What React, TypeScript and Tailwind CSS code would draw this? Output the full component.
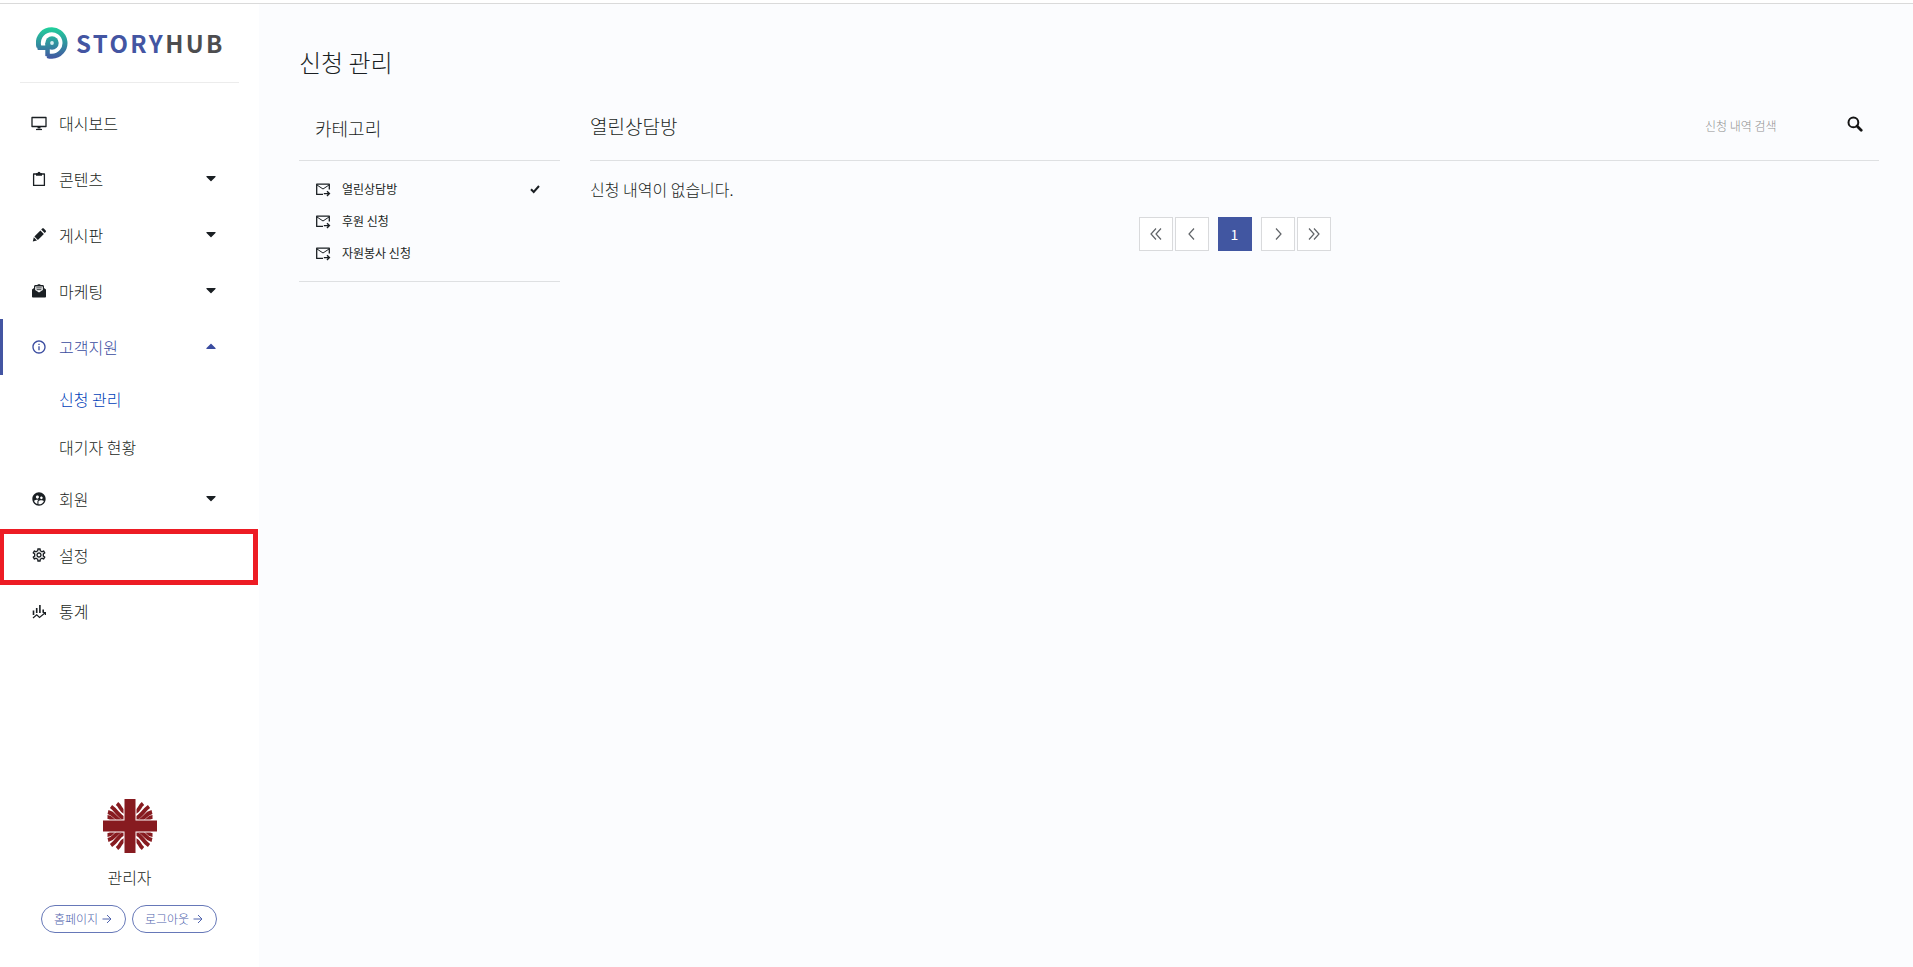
import { FaCaretDown, FaCaretUp } from 'react-icons/fa';
import { MdInfoOutline, MdOutlineSettings, MdSupervisedUserCircle } from 'react-icons/md';

interface MenuItem { label: string; icon: React.ReactNode; caret?: 'down' | 'up'; active?: boolean; marked?: boolean; children?: { label: string; active?: boolean }[]; }

const DesktopIcon = () => (
    <svg width="16" height="16" viewBox="0 0 16 16" fill="none" stroke="currentColor">
        <path d="M1 2.5h14v9H1z" strokeWidth="1.3" strokeLinejoin="round" />
        <path d="M6.5 11.5h3v2h-3z" fill="currentColor" stroke="none" />
        <path d="M5 14.500h6" strokeWidth="1.2" />
    </svg>
);

const ClipboardIcon = () => (
    <svg width="16" height="16" viewBox="0 0 16 16" fill="none" stroke="currentColor">
        <path d="M2.600 3h10.800v11.400H2.600z" strokeWidth="1.3" strokeLinejoin="round" />
        <path d="M5 2.200h1.500a1.500 1.500 0 0 1 3 0H11v2.600H5z" fill="currentColor" stroke="none" />
    </svg>
);

const PencilIcon = () => (
    <svg width="16" height="16" viewBox="0 0 16 16" fill="currentColor">
        <path d="M1.800 14.400l1-4.200 3.200 3.200zM3.400 9.400l6-6 3.500 3.500-6 6zM10.200 2.600l1-1c.5-.5 1.100-.5 1.600 0l1.900 1.900c.5.5.5 1.100 0 1.600l-1 1z" />
    </svg>
);

const MailOpenIcon = () => (
    <svg width="16" height="16" viewBox="0 0 16 16">
        <path d="M1 6.500l2-1.600V3.700C3 2.500 4 2.100 5 2.100h1L8 1.100l2 1h1c1 0 2 .4 2 1.600v1.200l2 1.600v7.200c0 .5-.4.8-.8.8H1.800c-.4 0-.8-.3-.8-.8z" fill="currentColor" />
        <path d="M4.200 3.500h7.600v3.600L8 9.500 4.200 7.100z" fill="#fff" />
        <path d="M5.200 4.900h5.600M5.600 6.700h4.800" stroke="currentColor" strokeWidth=".9" />
    </svg>
);

const StatsIcon = () => (
    <svg width="16" height="16" viewBox="0 0 16 16" fill="none" stroke="currentColor">
        <path d="M2.500 7.500v4.500M5.700 5V10M8.900 2v8M12.200 6.500v3" strokeWidth="1.6" />
        <path d="M2 15l3.700-3.200 2.800 2.700 5.400-4.500" strokeWidth="1.2" />
        <path d="M11.800 9.500h2.600v2.600" strokeWidth="1.2" />
    </svg>
);

const MailSendIcon = () => (
    <svg width="16" height="16" viewBox="0 0 16 16" fill="none" stroke="currentColor" strokeWidth="1.3">
        <path d="M8 13.400H1.700V3.200h12.600v5.300" strokeLinejoin="round" />
        <path d="M2 4l6 4 6-4" strokeWidth="1" />
        <path d="M8.800 12.600h5M12 10.300l2.400 2.300-2.400 2.300" strokeWidth="1.4" />
    </svg>
);

const CheckIcon = () => (
    <svg width="10" height="10" viewBox="0 0 10 10" fill="none" stroke="currentColor" strokeWidth="2">
        <path d="M1 5.200L3.700 8 9 2" />
    </svg>
);

const SearchIcon = () => (
    <svg width="16" height="16" viewBox="0 0 16 16" fill="none" stroke="currentColor">
        <circle cx="6.4" cy="6.4" r="4.9" strokeWidth="2" />
        <path d="M10 10l4.200 4.200" strokeWidth="2.8" strokeLinecap="round" />
    </svg>
);

const Logo = () => (
    <svg width="32" height="32" viewBox="0 0 32 32" fill="none" className="shrink-0">
        <defs>
            <linearGradient id="logo" gradientUnits="userSpaceOnUse" x1="16" y1="0" x2="16" y2="32">
                <stop offset="0" stopColor="#1fd29b" />
                <stop offset="1" stopColor="#4355a2" />
            </linearGradient>
        </defs>
        <path d="M3 20A13.300 13.300 0 1 1 16 29.300q-2.500 0-4.500-.7" stroke="url(#logo)" strokeWidth="5" />
        <path d="M.6 18.500H10v4.500H1.800zM9.300 16h4.500v14.500l-4.500-1.500z" fill="url(#logo)" />
        <circle cx="16" cy="16" r="6.700" fill="url(#logo)" />
        <circle cx="16" cy="16" r="1.900" fill="#d8eef0" />
    </svg>
);

const Emblem = () => (
    <svg width="54" height="54" viewBox="0 0 54 54">
        {['', 'translate(54 0) scale(-1 1)', 'translate(0 54) scale(1 -1)', 'translate(54 54) scale(-1 -1)'].map(flip => (
            <g key={flip} transform={flip} fill="none" stroke="#871b20" strokeWidth="3.9">
                <path d="M31 14q4-2 5.500-5t3.500-4.500" />
                <path d="M31 20.500q5-2 8.500-6.500t6.500-6.500" />
                <path d="M35 22.500q4-1.500 7-5t7-4.500" />
                <path d="M41.500 23q2.500-1 4-3t4-2" />
            </g>
        ))}
        <path d="M20.500 0h13v20.500H54v13H33.500V54h-13V33.500H0v-13h20.500z" fill="#fff" />
        <path d="M21.500 0h11v21.500H54v11H32.500V54h-11V32.500H0v-11h21.500z" fill="#871b20" />
    </svg>
);

const menu: MenuItem[] = [
    { label: '대시보드', icon: <DesktopIcon /> },
    { label: '콘텐츠', icon: <ClipboardIcon />, caret: 'down' },
    { label: '게시판', icon: <PencilIcon />, caret: 'down' },
    { label: '마케팅', icon: <MailOpenIcon />, caret: 'down' },
    { label: '고객지원', icon: <MdInfoOutline size={16} />, caret: 'up', active: true, children: [{ label: '신청 관리', active: true }, { label: '대기자 현황' }] },
    { label: '회원', icon: <MdSupervisedUserCircle size={16} />, caret: 'down' },
    { label: '설정', icon: <MdOutlineSettings size={16} />, marked: true },
    { label: '통계', icon: <StatsIcon /> },
];

const categories = ['열린상담방', '후원 신청', '자원봉사 신청'];

function Chevrons({ double, right }: { double?: boolean; right?: boolean }) {
    return (
        <svg width="12" height="12" viewBox="0 0 12 12" fill="none" stroke="#606468" strokeWidth="1.2" className={right ? 'rotate-180' : ''}>
            {double ? <path d="M6 .5L1 6l5 5.500M11 .5L6 6l5 5.500" /> : <path d="M8 .5L3 6l5 5.500" />}
        </svg>
    );
}

function PageButton({ label, double, right }: { label: string; double?: boolean; right?: boolean }) {
    return (
        <button type="button" aria-label={label} className="flex size-[34px] items-center justify-center border border-[#d9dadc] bg-white">
            <Chevrons double={double} right={right} />
        </button>
    );
}

function PillLink({ label }: { label: string }) {
    return (
        <a href="#" className="flex h-7 w-[85px] items-center justify-center gap-1 rounded-full border border-[#6678b8] text-xs text-[#4f63ad]">
            {label}
            <svg width="10" height="10" viewBox="0 0 10 10" fill="none" stroke="currentColor"><path d="M.5 5H9M5 1l4 4-4 4" /></svg>
        </a>
    );
}

export default function App() {
    return (
        <div className="flex min-h-screen flex-col bg-[#fbfcfe] font-['Noto_Sans_CJK_KR','Noto_Sans',sans-serif] font-light text-[#1a1f23]">
            <div className="h-1 border-b border-[#dadada] bg-white" />
            <div className="flex grow">
                <aside className="flex w-[259px] shrink-0 flex-col bg-white">
                    <div className="mx-5 flex h-[79px] items-center gap-2 border-b border-[#ececec] pl-4">
                        <Logo />
                        <span className="text-2xl font-bold tracking-widest text-[#4355a2]">STORY<span className="text-[#4d4d4f]">HUB</span></span>
                    </div>
                    <nav className="mt-3">
                        {menu.map(item => (
                            <div key={item.label}>
                                <a href="#" className={`relative flex h-14 items-center pr-10 pl-[31px] ${item.active ? 'text-[#3a4ca0]' : ''}`}>
                                    {item.active && <span className="absolute inset-y-0 left-0 w-[3px] bg-[#4355a2]" />}
                                    {item.marked && <span className="absolute top-0.5 right-px -bottom-0.5 left-0 border-[5px] border-l-4 border-[#ed1c24]" />}
                                    <span className="flex w-4 justify-center">{item.icon}</span>
                                    <span className="ml-3 grow">{item.label}</span>
                                    {item.caret === 'down' && <FaCaretDown size={16} className="mb-[3px]" />}
                                    {item.caret === 'up' && <FaCaretUp size={16} className="mb-[3px]" />}
                                </a>
                                {item.children?.map(child => (
                                    <a key={child.label} href="#" className={`flex h-12 items-center pl-[59px] ${child.active ? 'text-[#0040b8]' : ''}`}>{child.label}</a>
                                ))}
                            </div>
                        ))}
                    </nav>
                    <div className="mt-auto flex flex-col items-center pb-[34px]">
                        <Emblem />
                        <p className="mt-3">관리자</p>
                        <div className="mt-4 mr-0.5 flex gap-1.5">
                            <PillLink label="홈페이지" />
                            <PillLink label="로그아웃" />
                        </div>
                    </div>
                </aside>

                <main className="grow pr-[34px] pl-10">
                    <h1 className="mt-[42px] text-2xl">신청 관리</h1>
                    <div className="mt-[18px] flex items-start gap-[30px]">
                        <section className="w-[261px] shrink-0 border-b border-[#dee0e2] pb-3">
                            <h2 className="flex h-[65px] items-center border-b border-[#dee0e2] px-4 text-lg">카테고리</h2>
                            <ul className="mt-3 text-xs font-normal">
                                {categories.map((name, i) => (
                                    <li key={name}>
                                        <a href="#" className="flex h-8 items-center gap-[11px] px-4">
                                            <MailSendIcon />
                                            <span className="grow">{name}</span>
                                            {i === 0 && <span className="mr-1"><CheckIcon /></span>}
                                        </a>
                                    </li>
                                ))}
                            </ul>
                        </section>
                        <section className="grow">
                            <div className="flex h-[65px] items-center border-b border-[#dee0e2] pb-1">
                                <h2 className="grow text-[19px]">열린상담방</h2>
                                <input type="text" aria-label="신청 내역 검색" placeholder="신청 내역 검색" className="w-[142px] text-xs outline-none placeholder:text-[#8f8f8f]" />
                                <button type="button" aria-label="검색" className="mr-4 pb-1 text-[#141414]"><SearchIcon /></button>
                            </div>
                            <p className="mt-4">신청 내역이 없습니다.</p>
                            <div className="mt-4 flex justify-center gap-0.5">
                                <PageButton label="처음" double />
                                <PageButton label="이전" />
                                <button type="button" className="mx-[7px] size-[34px] bg-[#4156a1] text-sm font-normal text-white">1</button>
                                <PageButton label="다음" right />
                                <PageButton label="마지막" double right />
                            </div>
                        </section>
                    </div>
                </main>
            </div>
        </div>
    );
}
